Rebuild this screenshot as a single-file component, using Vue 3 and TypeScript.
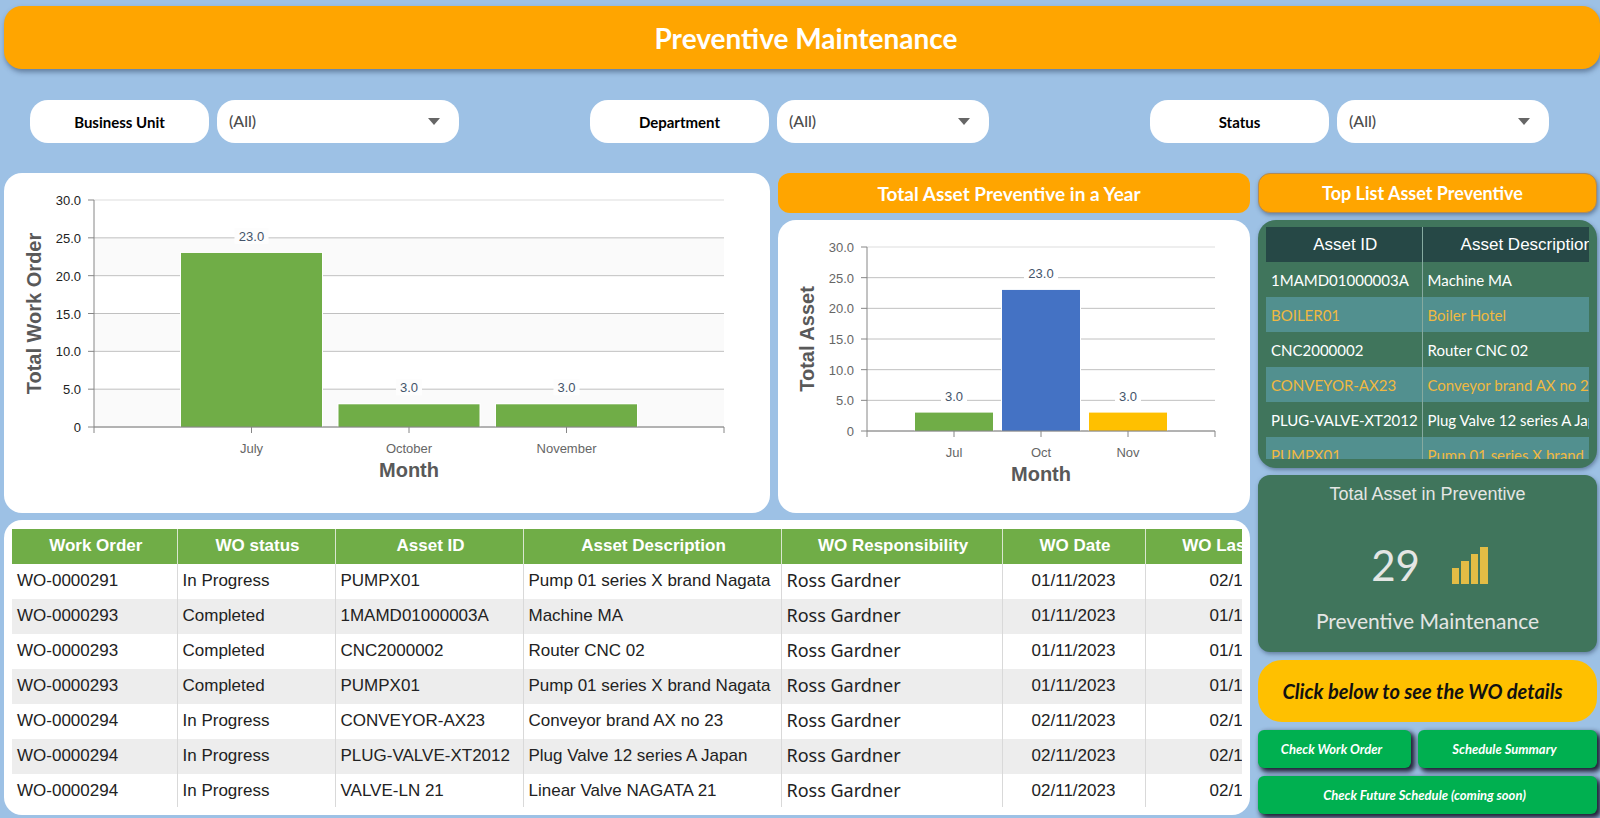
<script setup lang="ts">
interface Filter {
  id: string
  label: string
  wide: boolean
}

interface WorkOrder {
  order: string
  status: string
  asset: string
  description: string
  date: string
  updated: string
}

interface Bar {
  month: string
  value: number
  color: string
}

interface ChartSpec {
  name: string
  width: number
  height: number
  left: number
  right: number
  top: number
  bottom: number
  barWidth: number
  tickColor: string
  banded: boolean
  titleX: number
  bars: Bar[]
}

const filters: Filter[] = [
  { id: 'business-unit', label: 'Business Unit', wide: true },
  { id: 'department', label: 'Department', wide: false },
  { id: 'status', label: 'Status', wide: false },
]

const workOrderChart: ChartSpec = {
  name: 'Total Work Order',
  width: 766, height: 340, left: 90, right: 720, top: 27, bottom: 254,
  barWidth: 141, tickColor: '#222222', banded: true, titleX: 37,
  bars: [
    { month: 'July', value: 23, color: '#70ad47' },
    { month: 'October', value: 3, color: '#70ad47' },
    { month: 'November', value: 3, color: '#70ad47' },
  ],
}

const assetChart: ChartSpec = {
  name: 'Total Asset',
  width: 472, height: 293, left: 89, right: 437, top: 27, bottom: 211,
  barWidth: 78, tickColor: '#666666', banded: false, titleX: 36,
  bars: [
    { month: 'Jul', value: 3, color: '#70ad47' },
    { month: 'Oct', value: 23, color: '#4472c4' },
    { month: 'Nov', value: 3, color: '#ffc000' },
  ],
}

const ticks = [0, 5, 10, 15, 20, 25, 30]
const yOf = (c: ChartSpec, v: number) => c.bottom - (v / 30) * (c.bottom - c.top)
const xOf = (c: ChartSpec, i: number) => c.left + ((i + 1) / 4) * (c.right - c.left)
const tickText = (v: number) => (v === 0 ? '0' : v.toFixed(1))

const columns = ['Work Order', 'WO status', 'Asset ID', 'Asset Description', 'WO Responsibility', 'WO Date', 'WO Last Updated']
const workOrders: WorkOrder[] = [
  { order: 'WO-0000291', status: 'In Progress', asset: 'PUMPX01', description: 'Pump 01 series X brand Nagata', date: '01/11/2023', updated: '02/11/2023' },
  { order: 'WO-0000293', status: 'Completed', asset: '1MAMD01000003A', description: 'Machine MA', date: '01/11/2023', updated: '01/11/2023' },
  { order: 'WO-0000293', status: 'Completed', asset: 'CNC2000002', description: 'Router CNC 02', date: '01/11/2023', updated: '01/11/2023' },
  { order: 'WO-0000293', status: 'Completed', asset: 'PUMPX01', description: 'Pump 01 series X brand Nagata', date: '01/11/2023', updated: '01/11/2023' },
  { order: 'WO-0000294', status: 'In Progress', asset: 'CONVEYOR-AX23', description: 'Conveyor brand AX no 23', date: '02/11/2023', updated: '02/11/2023' },
  { order: 'WO-0000294', status: 'In Progress', asset: 'PLUG-VALVE-XT2012', description: 'Plug Valve 12 series A Japan', date: '02/11/2023', updated: '02/11/2023' },
  { order: 'WO-0000294', status: 'In Progress', asset: 'VALVE-LN 21', description: 'Linear Valve NAGATA 21', date: '02/11/2023', updated: '02/11/2023' },
]

const assets = [
  { id: '1MAMD01000003A', description: 'Machine MA' },
  { id: 'BOILER01', description: 'Boiler Hotel' },
  { id: 'CNC2000002', description: 'Router CNC 02' },
  { id: 'CONVEYOR-AX23', description: 'Conveyor brand AX no 23' },
  { id: 'PLUG-VALVE-XT2012', description: 'Plug Valve 12 series A Japan' },
  { id: 'PUMPX01', description: 'Pump 01 series X brand Nagata' },
]
</script>

<template>
  <div class="page">
    <header class="banner"><h1>Preventive Maintenance</h1></header>

    <form class="filters">
      <div v-for="f in filters" :key="f.id" class="filter">
        <label :for="f.id">{{ f.label }}</label>
        <div class="picker" :class="{ wide: f.wide }">
          <select :id="f.id"><option>(All)</option></select>
          <svg class="caret" viewBox="0 0 12 7" aria-hidden="true"><path d="M0 0H12L6 7Z" fill="#666" /></svg>
        </div>
      </div>
    </form>

    <main class="board">
      <section v-for="c in [workOrderChart, assetChart]" :key="c.name" class="chart-column">
        <h2 v-if="c === assetChart" class="strip">Total Asset Preventive in a Year</h2>
        <div class="card">
          <svg class="chart" :viewBox="`0 0 ${c.width} ${c.height}`" role="img" :aria-label="c.name + ' by month'">
            <template v-if="c.banded">
              <rect v-for="v in [5, 15, 25]" :key="v" :x="c.left" :y="yOf(c, v)" :width="c.right - c.left" :height="yOf(c, 0) - yOf(c, 5)" fill="#fafafa" />
            </template>
            <g v-for="v in ticks" :key="v">
              <line :x1="c.left" :x2="c.right" :y1="yOf(c, v)" :y2="yOf(c, v)" :stroke="v === 30 ? '#dddddd' : '#c0c0c0'" />
              <line :x1="c.left - 6" :x2="c.left" :y1="yOf(c, v)" :y2="yOf(c, v)" stroke="#868686" />
              <text class="tick" :x="c.left - 13" :y="yOf(c, v) + 5" text-anchor="end" :fill="c.tickColor">{{ tickText(v) }}</text>
            </g>
            <g v-for="(b, i) in c.bars" :key="b.month">
              <rect :x="xOf(c, i) - c.barWidth / 2 - 1" :y="yOf(c, b.value) - 1" :width="c.barWidth + 2" :height="c.bottom - yOf(c, b.value) + 1" fill="#fff" />
              <rect :x="xOf(c, i) - c.barWidth / 2" :y="yOf(c, b.value)" :width="c.barWidth" :height="c.bottom - yOf(c, b.value)" :fill="b.color" />
              <rect :x="xOf(c, i) - (b.value > 9 ? 17 : 13)" :y="yOf(c, b.value) - 25" :width="b.value > 9 ? 34 : 26" height="16" :fill="c.banded ? '#fdfdfd' : '#fff'" />
              <text class="tick" :x="xOf(c, i)" :y="yOf(c, b.value) - 12" text-anchor="middle" fill="#44546a">{{ b.value.toFixed(1) }}</text>
              <line :x1="xOf(c, i)" :x2="xOf(c, i)" :y1="c.bottom" :y2="c.bottom + 6" stroke="#868686" />
              <text class="tick" :x="xOf(c, i)" :y="c.bottom + 26" text-anchor="middle" fill="#666">{{ b.month }}</text>
            </g>
            <path :d="`M${c.left} ${c.top}V${c.bottom + 6}M${c.left} ${c.bottom}H${c.right}V${c.bottom + 6}`" fill="none" stroke="#868686" />
            <text class="axis" :x="(c.left + c.right) / 2" :y="c.bottom + 50" text-anchor="middle">Month</text>
            <text class="axis" :transform="`translate(${c.titleX} ${(c.top + c.bottom) / 2}) rotate(-90)`" text-anchor="middle">{{ c.name }}</text>
          </svg>
        </div>
      </section>

      <section class="card orders">
        <div class="clip orders-clip">
          <table class="orders-table">
            <colgroup><col class="w1"><col class="w2"><col class="w3"><col class="w4"><col class="w5"><col class="w6"><col class="w7"></colgroup>
            <thead>
              <tr><th v-for="h in columns" :key="h" scope="col">{{ h }}</th></tr>
            </thead>
            <tbody>
              <tr v-for="(w, i) in workOrders" :key="i">
                <td>{{ w.order }}</td>
                <td>{{ w.status }}</td>
                <td>{{ w.asset }}</td>
                <td>{{ w.description }}</td>
                <td class="person">Ross Gardner</td>
                <td class="date">{{ w.date }}</td>
                <td class="date">{{ w.updated }}</td>
              </tr>
            </tbody>
          </table>
        </div>
      </section>

      <aside class="side">
        <h2 class="strip raised">Top List Asset Preventive</h2>
        <section class="green assets">
          <div class="clip assets-clip">
            <table class="assets-table">
              <colgroup><col class="a1"><col class="a2"></colgroup>
              <thead><tr><th scope="col">Asset ID</th><th scope="col">Asset Description</th></tr></thead>
              <tbody>
                <tr v-for="a in assets" :key="a.id"><td>{{ a.id }}</td><td>{{ a.description }}</td></tr>
              </tbody>
            </table>
          </div>
        </section>
        <section class="green kpi">
          <h3>Total Asset in Preventive</h3>
          <div class="figure">
            <span class="number">29</span>
            <svg class="bars" viewBox="0 0 36 37" aria-hidden="true">
              <path d="M0 21H7V37H0ZM9 14H17V37H9ZM19 7H26V37H19ZM28 0H36V37H28Z" fill="#e3bc45" />
            </svg>
          </div>
          <p>Preventive Maintenance</p>
        </section>
        <p class="hint">Click below to see the WO details</p>
        <div class="actions">
          <button type="button">Check Work Order</button>
          <button type="button">Schedule Summary</button>
          <button type="button" class="full">Check Future Schedule (coming soon)</button>
        </div>
      </aside>
    </main>
  </div>
</template>

<style>
body {
  margin: 0;
  background: #9dc1e5;
}
</style>

<style scoped>
.page {
  box-sizing: border-box;
  min-height: 100vh;
  padding-top: 6px;
  overflow: hidden;
  background: #9dc1e5;
  font-family: Lato, sans-serif;
}
h1, h2, h3, p {
  margin: 0;
}
.banner {
  display: flex;
  align-items: center;
  justify-content: center;
  height: 63px;
  margin-left: 4px;
  padding-left: 8px;
  border-radius: 18px;
  background: #ffa500;
  box-shadow: 1px 3px 5px rgba(40, 60, 90, 0.5);
}
.banner h1 {
  color: #fff;
  font-size: 28px;
  line-height: 36px;
}
.filters {
  display: grid;
  grid-template-columns: 35% 35% 1fr;
  margin: 31px 0 30px;
}
.filter {
  display: flex;
  gap: 8px;
  padding-left: 30px;
}
.filter label {
  display: flex;
  align-items: center;
  justify-content: center;
  width: 179px;
  height: 43px;
  border-radius: 18px;
  background: #fff;
  color: #000;
  font-size: 15px;
  font-weight: 700;
}
.picker {
  position: relative;
  width: 212px;
}
.picker.wide {
  width: 242px;
}
.picker select {
  width: 100%;
  height: 43px;
  padding: 0 12px 2px;
  border: 0;
  border-radius: 18px;
  background: #fff;
  color: #4c4c4c;
  font: 500 16px Lato, sans-serif;
  appearance: none;
}
.caret {
  position: absolute;
  top: 18px;
  right: 19px;
  width: 12px;
  height: 7px;
  pointer-events: none;
}
.board {
  display: grid;
  grid-template-columns: 766fr 472fr 339fr;
  align-items: start;
  gap: 7px 8px;
  padding: 0 3px 0 4px;
}
.chart-column {
  min-width: 0;
}
.card {
  border-radius: 18px;
  background: #fff;
}
.chart {
  display: block;
  width: 100%;
  height: auto;
  font-family: "Liberation Sans", sans-serif;
}
.tick {
  font-size: 13px;
}
.axis {
  fill: #595959;
  font-size: 20px;
  font-weight: 700;
}
.strip {
  display: flex;
  align-items: center;
  justify-content: center;
  height: 40px;
  margin-bottom: 7px;
  padding-right: 10px;
  border-radius: 12px;
  background: #ffa500;
  color: #fff;
  font-size: 19px;
}
.strip.raised {
  box-sizing: border-box;
  border: 1px solid #b08a58;
  box-shadow: 1px 2px 4px rgba(40, 60, 90, 0.5);
  font-size: 18px;
}
.orders {
  grid-column: 1 / 3;
  min-width: 0;
  padding: 9px 8px 8px;
}
.clip {
  overflow: hidden;
}
.orders-clip {
  height: 278px;
}
table {
  border-collapse: collapse;
  table-layout: fixed;
}
th, td {
  box-sizing: border-box;
  height: 35px;
  padding: 0 5px;
  overflow: hidden;
  text-align: left;
  white-space: nowrap;
}
th {
  padding-left: 8px;
  text-align: center;
}
.orders-table {
  width: 1346px;
  font: 17px "Liberation Sans", sans-serif;
  color: #222;
}
.orders-table th,
.orders-table td {
  padding-bottom: 2px;
}
.w1 { width: 165px; }
.w2 { width: 158px; }
.w3 { width: 188px; }
.w4 { width: 258px; }
.w5 { width: 221px; }
.w6 { width: 143px; }
.w7 { width: 213px; }
.orders-table th {
  border-right: 1px solid #d9e6d0;
  background: #70ad47;
  color: #fff;
}
.orders-table td {
  border-right: 1px solid #d9d9d9;
}
.orders-table tbody tr:nth-child(even) {
  background: #ededed;
}
.orders-table .person {
  padding-bottom: 4px;
  font: 18px/24px "Noto Sans", sans-serif;
}
.orders-table .date {
  text-align: center;
}
.side {
  grid-column: 3;
  grid-row: 1 / 3;
  min-width: 0;
}
.green {
  background: #40755c;
  box-shadow: 1px 2px 4px rgba(40, 60, 90, 0.5);
}
.assets {
  margin-bottom: 7px;
  padding: 7px 8px 9px;
  border-radius: 18px;
}
.assets-clip {
  height: 232px;
}
.assets-table {
  width: 362px;
  color: #fff;
  font-size: 15px;
}
.a1 { width: 156px; }
.a2 { width: 206px; }
.assets-table th {
  background: #264846;
  font: 17px "Liberation Sans", sans-serif;
}
.assets-table th:first-child,
.assets-table td:first-child {
  border-right: 1px solid #86aaa0;
}
.assets-table tbody tr:nth-child(even) {
  background: #52908f;
  color: #f0b840;
}
.kpi {
  display: flex;
  flex-direction: column;
  align-items: center;
  box-sizing: border-box;
  height: 177px;
  padding-top: 8px;
  border-radius: 12px;
  color: #e4e6e4;
}
.kpi h3 {
  font: 18px/22px "Liberation Sans", sans-serif;
}
.kpi p {
  margin-top: 20px;
  font-size: 21px;
  line-height: 28px;
}
.figure {
  display: flex;
  align-items: center;
  gap: 32px;
  margin-top: 38px;
  margin-left: 4px;
}
.number {
  font-size: 42px;
  line-height: 44px;
}
.bars {
  width: 36px;
  height: 37px;
}
.hint {
  display: flex;
  align-items: center;
  justify-content: center;
  height: 62px;
  margin: 8px 0;
  padding-right: 10px;
  border-radius: 24px;
  background: #ffc000;
  color: #111;
  font-size: 20px;
  font-style: italic;
  font-weight: 700;
}
.actions {
  display: grid;
  grid-template-columns: 153fr 179fr;
  gap: 8px 7px;
}
.actions button {
  height: 38px;
  padding: 0 6px 0 0;
  border: 0;
  border-radius: 6px;
  background: #00b050;
  box-shadow: 3px 3px 5px 1px rgba(20, 15, 35, 0.9);
  color: #fff;
  font: italic 700 13px Lato, sans-serif;
}
.actions .full {
  grid-column: 1 / 3;
}
</style>
